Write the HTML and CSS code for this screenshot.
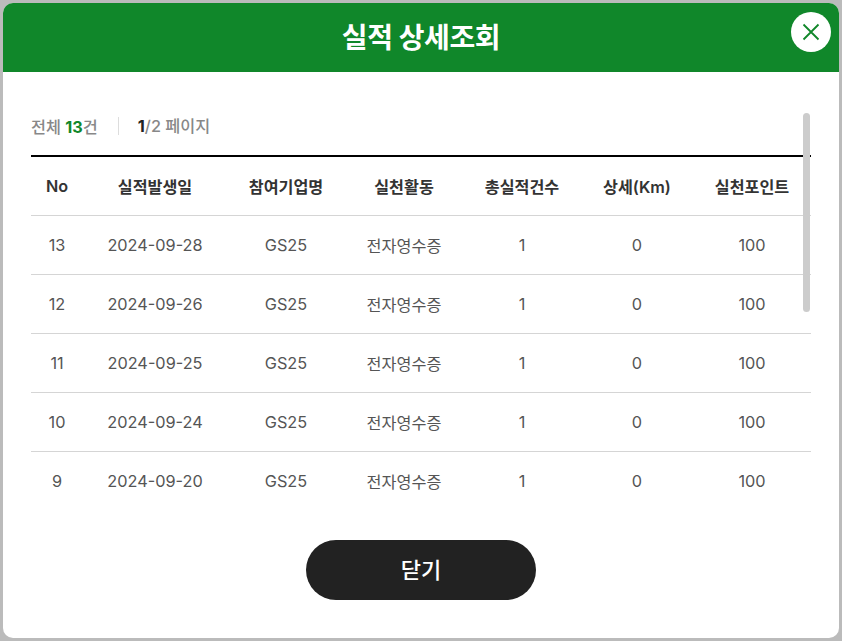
FILE: index.html
```html
<!DOCTYPE html>
<html lang="ko">
<head>
    <meta charset="UTF-8">
    <meta name="viewport" content="width=device-width, initial-scale=1.0">
    <title>실적 상세조회</title>
    <link rel="stylesheet" href="styles.css">
</head>
<body>

    <div class="modal">
        <div class="modalHead">
            <h1>실적 상세조회</h1>
            <button class="closeBtn" type="button" aria-label="닫기">
                <svg width="20" height="20" viewBox="0 0 20 20">
                    <path d="M2.5 2.5L17.5 17.5M17.5 2.5L2.5 17.5" stroke="#10872a" stroke-width="1.8" fill="none"/>
                </svg>
            </button>
        </div>

        <div class="modalBody">
            <div class="scrollThumb"></div>

            <div class="summary">
                <p class="total">전체 <b>13</b>건</p>
                <p class="page"><b>1</b>/2 페이지</p>
            </div>

            <table class="record">
                <colgroup>
                    <col class="colNo">
                    <col class="colDate">
                    <col class="colWide">
                    <col class="colWide">
                    <col class="colWide">
                    <col class="colKm">
                    <col class="colWide">
                </colgroup>
                <thead>
                    <tr>
                        <th>No</th>
                        <th>실적발생일</th>
                        <th>참여기업명</th>
                        <th>실천활동</th>
                        <th>총실적건수</th>
                        <th>상세(Km)</th>
                        <th>실천포인트</th>
                    </tr>
                </thead>
                <tbody>
                    <tr>
                        <td>13</td>
                        <td>2024-09-28</td>
                        <td>GS25</td>
                        <td>전자영수증</td>
                        <td>1</td>
                        <td>0</td>
                        <td>100</td>
                    </tr>
                    <tr>
                        <td>12</td>
                        <td>2024-09-26</td>
                        <td>GS25</td>
                        <td>전자영수증</td>
                        <td>1</td>
                        <td>0</td>
                        <td>100</td>
                    </tr>
                    <tr>
                        <td>11</td>
                        <td>2024-09-25</td>
                        <td>GS25</td>
                        <td>전자영수증</td>
                        <td>1</td>
                        <td>0</td>
                        <td>100</td>
                    </tr>
                    <tr>
                        <td>10</td>
                        <td>2024-09-24</td>
                        <td>GS25</td>
                        <td>전자영수증</td>
                        <td>1</td>
                        <td>0</td>
                        <td>100</td>
                    </tr>
                    <tr>
                        <td>9</td>
                        <td>2024-09-20</td>
                        <td>GS25</td>
                        <td>전자영수증</td>
                        <td>1</td>
                        <td>0</td>
                        <td>100</td>
                    </tr>
                </tbody>
            </table>
        </div>

        <div class="modalFoot">
            <button class="closeWide" type="button">닫기</button>
        </div>
    </div>

</body>
</html>
```

FILE: styles.css
```css
* {
    box-sizing: border-box;
}

html, body {
    height: 100%;
}

body {
    margin: 0;
    overflow: hidden;
    padding: 3px;
    background-color: #bbbbbb;
    font-family: Inter, "Noto Sans CJK KR", sans-serif;
    color: #222222;
}

.modal {
    position: relative;
    display: flex;
    flex-direction: column;
    height: 635px;
    background-color: #ffffff;
    border-radius: 10px;
    overflow: hidden;
}

.modalHead {
    height: 69px;
    flex-shrink: 0;
    display: flex;
    align-items: center;
    justify-content: center;
    padding-bottom: 3px;
    background-color: #10872a;
}

.modalHead h1 {
    margin: 0;
    font-size: 28px;
    font-weight: 700;
    letter-spacing: -0.4px;
    color: #ffffff;
}

.closeBtn {
    position: absolute;
    top: 9px;
    right: 8px;
    width: 40px;
    height: 40px;
    padding: 0;
    display: flex;
    align-items: center;
    justify-content: center;
    border: none;
    border-radius: 50%;
    background-color: #ffffff;
}

.modalBody {
    position: relative;
    height: 438px;
    flex-shrink: 0;
    overflow: hidden;
    padding: 0 28px;
}

.scrollThumb {
    position: absolute;
    top: 41px;
    right: 29px;
    width: 7px;
    height: 199px;
    border-radius: 4px;
    background-color: #cccccc;
}

.summary {
    height: 83px;
    display: flex;
    align-items: center;
    padding-top: 25px;
    font-size: 16.3px;
    font-weight: 500;
    color: #888888;
}

.summary p {
    margin: 0;
}

.total b {
    font-weight: 700;
    color: #10872a;
}

.page {
    margin-left: 20px !important;
    padding-left: 19px;
    border-left: 1px solid #dddddd;
    line-height: 18px;
}

.page b {
    font-weight: 700;
    color: #222222;
}

.record {
    width: 780px;
    table-layout: fixed;
    border-collapse: collapse;
    border-top: 2px solid #000000;
    text-align: center;
}

.colNo { width: 52px; }
.colDate { width: 144px; }
.colWide { width: 118px; }
.colKm { width: 112px; }

.record th {
    height: 59px;
    padding: 0;
    font-size: 16.2px;
    font-weight: 600;
    color: #333333;
    border-bottom: 1px solid #d5d5d5;
}

.record td {
    height: 59px;
    padding: 1px 0 0;
    font-size: 16.3px;
    color: #555555;
    border-bottom: 1px solid #d5d5d5;
}

.record tbody tr:last-child td {
    border-bottom: none;
}

.modalFoot {
    display: flex;
    justify-content: center;
    padding-top: 30px;
}

.closeWide {
    width: 230px;
    height: 60px;
    padding: 0 0 4px;
    border: none;
    border-radius: 30px;
    background-color: #222222;
    color: #ffffff;
    font-family: Inter, "Noto Sans CJK KR", sans-serif;
    font-size: 22px;
    font-weight: 500;
}
```
